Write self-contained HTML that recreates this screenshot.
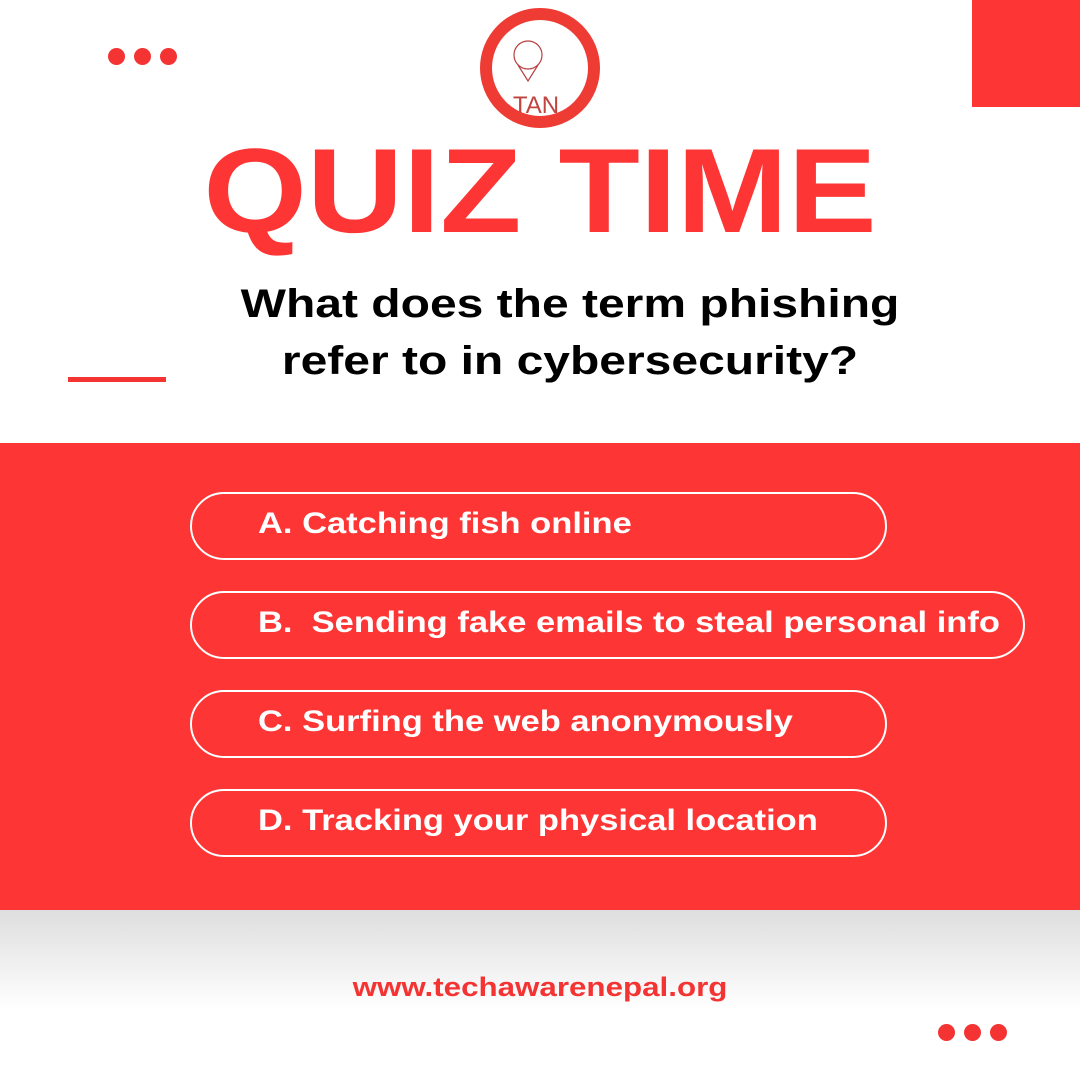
<!DOCTYPE html>
<html><head><style>
body{margin:0;width:1080px;height:1080px;position:relative;overflow:hidden;background:#fff;font-family:"Liberation Sans",sans-serif}
.a{position:absolute}
.dot{position:absolute;width:17px;height:17px;border-radius:50%;background:#f43333}
.pill{position:absolute;left:190px;height:64px;border:2px solid #fff;border-radius:34px;width:693px}
.pt{position:absolute;left:258px;color:#fff;font-weight:bold;font-size:30px;line-height:68px;transform:scaleX(1.15);transform-origin:left center;white-space:nowrap}
</style></head><body>
<div class="dot" style="left:108px;top:48px"></div>
<div class="dot" style="left:134px;top:48px"></div>
<div class="dot" style="left:160px;top:48px"></div>
<div class="a" style="left:972px;top:0;width:108px;height:107px;background:#fe3535"></div>
<div class="a" style="left:68px;top:377px;width:98px;height:5px;background:#f43333"></div>
<svg class="a" style="left:470px;top:5px" width="140" height="130" viewBox="0 0 140 130">
<circle cx="70" cy="63" r="54" fill="none" stroke="#ee3b33" stroke-width="12"/>
<circle cx="58" cy="50" r="14" fill="none" stroke="#b84040" stroke-width="1.2"/>
<path d="M48 60 L58 76 L68 60" fill="none" stroke="#b84040" stroke-width="1.2"/>
<text x="66" y="108" text-anchor="middle" font-size="24" fill="#c0443f" font-family="Liberation Sans">TAN</text>
</svg>
<div class="a" style="left:0;width:1080px;top:126px;text-align:center;color:#fe3535;font-weight:bold;font-size:120px;line-height:130px;transform:scaleX(1.11)">QUIZ TIME</div>
<div class="a" style="left:0;width:1140px;top:276px;text-align:center;color:#000;font-weight:bold;font-size:40px;line-height:57px;transform:scaleX(1.2)">What does the term phishing<br>refer to in cybersecurity?</div>
<div class="a" style="left:0;top:443px;width:1080px;height:467px;background:#fe3535"></div>
<div class="a" style="left:0;top:910px;width:1080px;height:100px;background:linear-gradient(#dedede,#fff)"></div>
<div class="pill" style="top:492px"></div><div class="pt" style="top:490px">A. Catching fish online</div>
<div class="pill" style="top:591px;width:831px"></div><div class="pt" style="top:589px">B.&nbsp; Sending fake emails to steal personal info</div>
<div class="pill" style="top:690px"></div><div class="pt" style="top:688px">C. Surfing the web anonymously</div>
<div class="pill" style="top:789px"></div><div class="pt" style="top:787px">D. Tracking your physical location</div>
<div class="a" style="left:0;width:1080px;top:972px;text-align:center;color:#f43333;font-weight:bold;font-size:27px;transform:scaleX(1.16)">www.techawarenepal.org</div>
<div class="dot" style="left:938px;top:1024px"></div>
<div class="dot" style="left:964px;top:1024px"></div>
<div class="dot" style="left:990px;top:1024px"></div>
</body></html>
